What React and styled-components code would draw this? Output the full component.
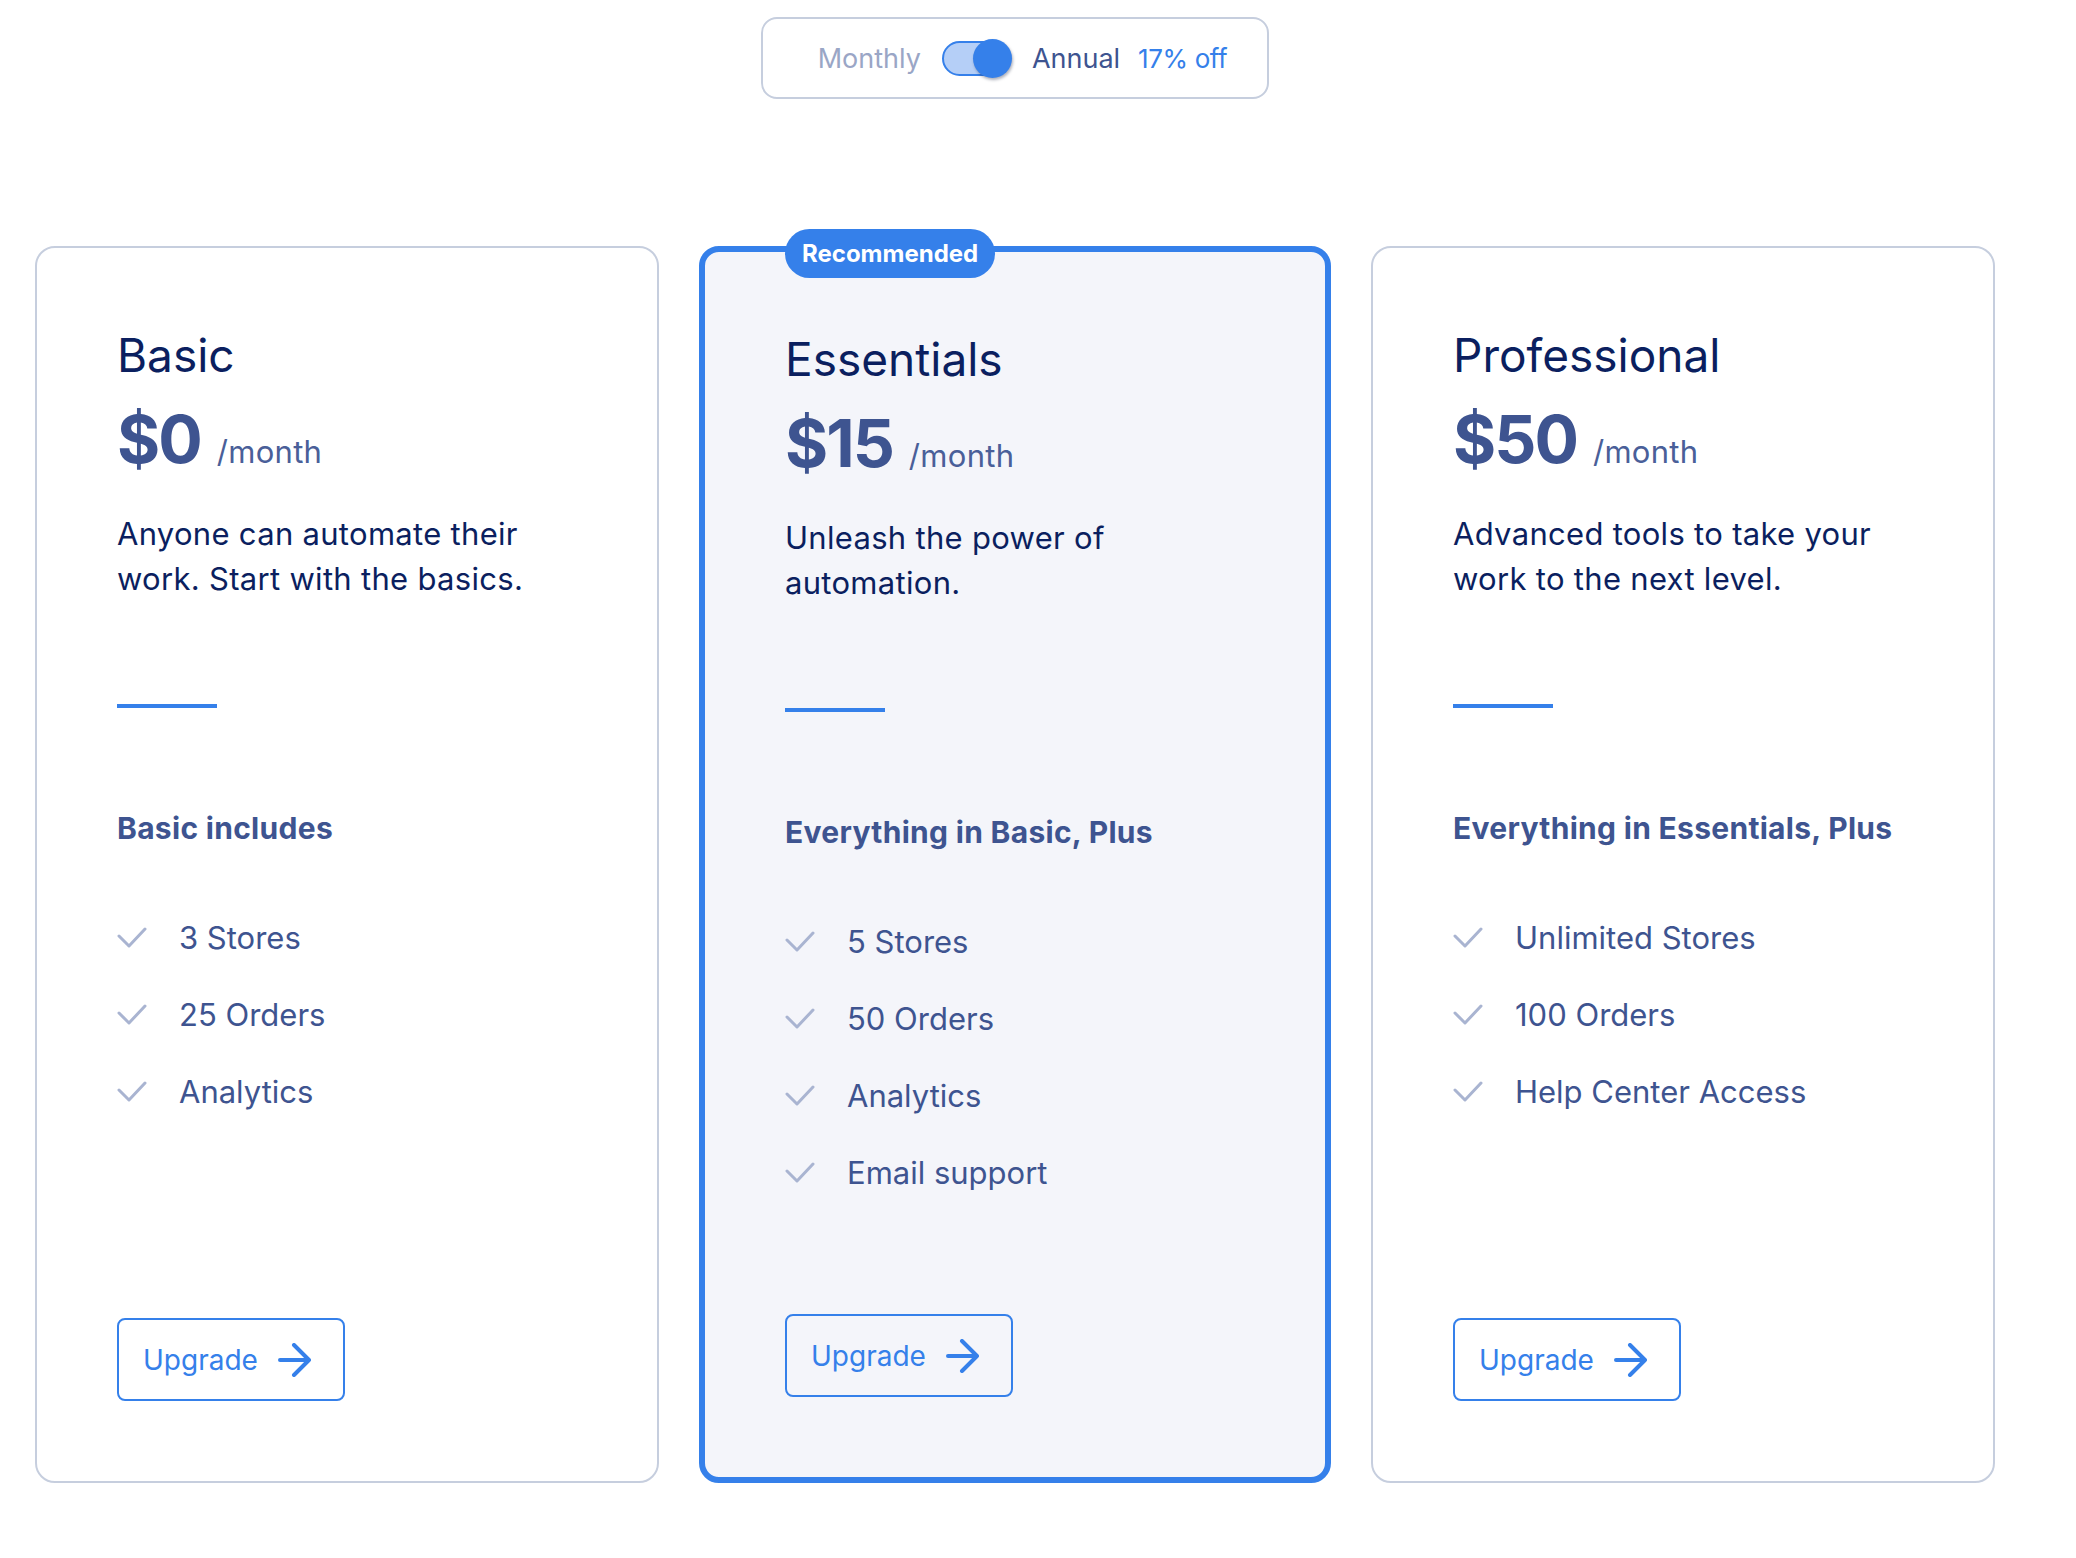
import React, { useState } from 'react';
import styled, { createGlobalStyle } from 'styled-components';

const GlobalStyle = createGlobalStyle`
  * {
    margin: 0;
    padding: 0;
  }

  body {
    background: #ffffff;
    font-family: Inter, "Noto Sans", sans-serif;
    -webkit-font-smoothing: antialiased;
  }
`;

const plans = [
  {
    name: 'Basic',
    price: '$0',
    description: 'Anyone can automate their work. Start with the basics.',
    heading: 'Basic includes',
    features: ['3 Stores', '25 Orders', 'Analytics'],
  },
  {
    name: 'Essentials',
    price: '$15',
    description: 'Unleash the power of automation.',
    heading: 'Everything in Basic, Plus',
    features: ['5 Stores', '50 Orders', 'Analytics', 'Email support'],
    recommended: true,
  },
  {
    name: 'Professional',
    price: '$50',
    description: 'Advanced tools to take your work to the next level.',
    heading: 'Everything in Essentials, Plus',
    features: ['Unlimited Stores', '100 Orders', 'Help Center Access'],
  },
];

const CheckIcon = () => (
  <svg width="30" height="22" viewBox="0 0 30 22" fill="none">
    <polyline
      points="2,9 12,19 28,2"
      stroke="#a9b4d1"
      strokeWidth="3"
      strokeLinecap="round"
      strokeLinejoin="round"
    />
  </svg>
);

const ArrowIcon = () => (
  <svg width="34" height="34" viewBox="0 0 34 34" fill="none">
    <path
      d="M2 17H31M16 2L31 17L16 32"
      stroke="#3580ea"
      strokeWidth="4"
      strokeLinecap="round"
      strokeLinejoin="round"
    />
  </svg>
);

const PlanCard = ({ plan }) => (
  <Card $featured={plan.recommended}>
    {plan.recommended && <Badge>Recommended</Badge>}
    <Title>{plan.name}</Title>
    <Price>
      <Amount>{plan.price}</Amount>
      <Per>/month</Per>
    </Price>
    <Description>{plan.description}</Description>
    <Divider />
    <FeatureHeading>{plan.heading}</FeatureHeading>
    <FeatureList>
      {plan.features.map((f) => (
        <Feature key={f}>
          <CheckIcon />
          <span>{f}</span>
        </Feature>
      ))}
    </FeatureList>
    <UpgradeButton type="button">
      Upgrade
      <ArrowIcon />
    </UpgradeButton>
  </Card>
);

const App = () => {
  const [annual, setAnnual] = useState(true);

  return (
    <>
      <GlobalStyle />
      <Page>
        <ToggleRow>
          <BillingToggle>
            <Period $muted={annual}>Monthly</Period>
            <Switch type="button" onClick={() => setAnnual(!annual)} $on={annual}>
              <Knob $on={annual} />
            </Switch>
            <Period $muted={!annual}>Annual</Period>
            <Discount>17% off</Discount>
          </BillingToggle>
        </ToggleRow>
        <Cards>
          {plans.map((p) => (
            <PlanCard key={p.name} plan={p} />
          ))}
        </Cards>
      </Page>
    </>
  );
};

const Page = styled.main`
  width: 1960px;
  margin-left: 35px;
  padding-top: 17px;
`;

const ToggleRow = styled.div`
  display: flex;
  justify-content: center;
`;

const BillingToggle = styled.div`
  display: inline-flex;
  align-items: center;
  height: 82px;
  box-sizing: border-box;
  padding: 0 40px 0 55px;
  border: 2px solid #c6cede;
  border-radius: 16px;
`;

const Period = styled.span`
  font-size: 27px;
  color: ${(p) => (p.$muted ? '#9aa6c6' : '#3e5490')};
`;

const Discount = styled.span`
  font-size: 26px;
  letter-spacing: -0.4px;
  color: #3580ea;
  margin-left: 18px;
`;

const Switch = styled.button`
  position: relative;
  width: 65px;
  height: 35px;
  margin: 0 25px 0 21px;
  border: 2px solid #3580ea;
  border-radius: 18px;
  background: ${(p) => (p.$on ? '#b5cff7' : '#e6ebf5')};
  cursor: pointer;
`;

const Knob = styled.span`
  position: absolute;
  top: -4px;
  ${(p) => (p.$on ? 'right: -7px;' : 'left: -4px;')}
  width: 39px;
  height: 39px;
  border-radius: 50%;
  background: #3580ea;
  box-shadow: 1px 2px 3px rgba(20, 30, 60, 0.35);
`;

const Cards = styled.div`
  display: flex;
  gap: 40px;
  height: 1237px;
  margin-top: 147px;
`;

const Card = styled.article`
  position: relative;
  display: flex;
  flex-direction: column;
  width: 460px;
  padding: 80px;
  border: ${(p) => (p.$featured ? '6px solid #3580ea' : '2px solid #c6cede')};
  border-radius: 20px;
  background: ${(p) => (p.$featured ? '#f4f5fa' : '#ffffff')};
`;

const Badge = styled.span`
  position: absolute;
  top: -23px;
  left: 80px;
  height: 49px;
  padding: 0 17px;
  display: flex;
  align-items: center;
  border-radius: 25px;
  background: #3580ea;
  color: #ffffff;
  font-size: 24px;
  font-weight: 700;
`;

const Title = styled.h2`
  font-size: 46px;
  line-height: 55px;
  font-weight: 400;
  color: #0b1f5f;
`;

const Price = styled.div`
  margin-top: 22px;
  font-size: 66px;
  line-height: 68px;
`;

const Amount = styled.span`
  font-weight: 700;
  letter-spacing: -2px;
  color: #3e5490;
`;

const Per = styled.span`
  margin-left: 16px;
  font-size: 31px;
  line-height: 31px;
  letter-spacing: 0.3px;
  color: #4a5f99;
`;

const Description = styled.p`
  margin-top: 38px;
  font-size: 31px;
  line-height: 45px;
  letter-spacing: 0.3px;
  color: #0b1f5f;
`;

const Divider = styled.div`
  margin-top: 103px;
  width: 100px;
  height: 4px;
  background: #3580ea;
`;

const FeatureHeading = styled.h3`
  margin-top: 98px;
  font-size: 30px;
  line-height: 45px;
  font-weight: 700;
  letter-spacing: 0.3px;
  color: #3e5490;
  white-space: nowrap;
`;

const FeatureList = styled.ul`
  list-style: none;
  margin-top: 64px;
  display: flex;
  flex-direction: column;
  gap: 32px;
`;

const Feature = styled.li`
  display: flex;
  align-items: center;
  gap: 32px;
  font-size: 31px;
  line-height: 45px;
  color: #3e5490;
`;

const UpgradeButton = styled.button`
  margin-top: auto;
  align-self: flex-start;
  display: inline-flex;
  align-items: center;
  gap: 20px;
  height: 83px;
  box-sizing: border-box;
  padding: 0 31px 0 24px;
  border: 2px solid #3580ea;
  border-radius: 8px;
  background: transparent;
  font-family: inherit;
  font-size: 28px;
  color: #3580ea;
  cursor: pointer;
`;

export default App;
